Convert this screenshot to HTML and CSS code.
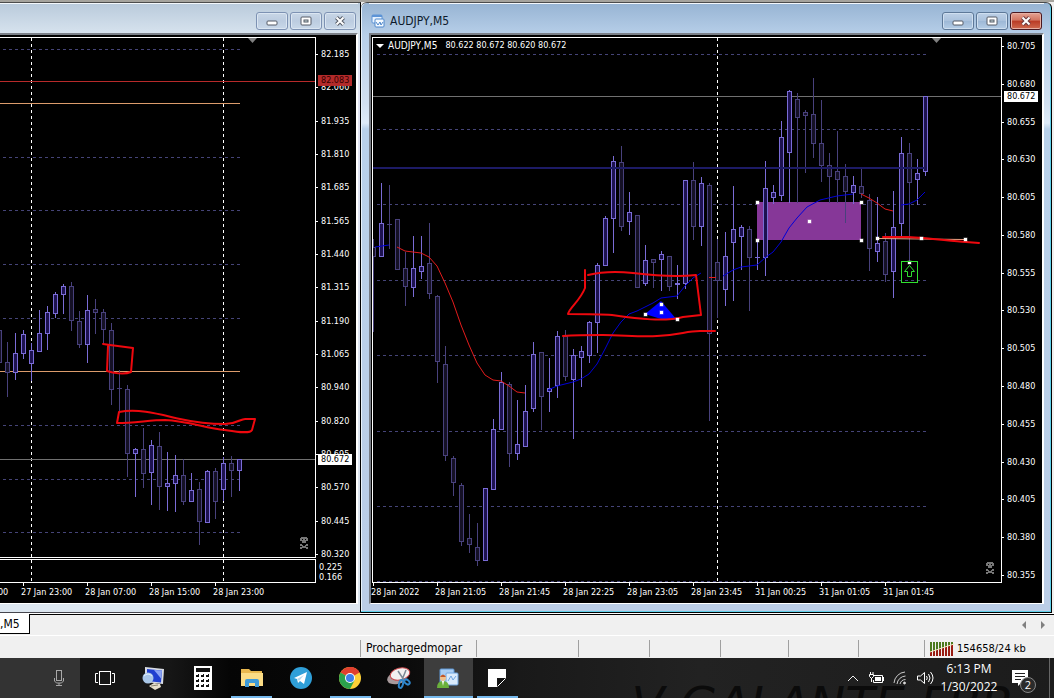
FILE: index.html
```html
<!DOCTYPE html>
<html lang="en">
<head>
    <meta charset="UTF-8">
    <meta name="viewport" content="width=device-width, initial-scale=1.0">
    <title>AUDJPY,M5</title>
    <link rel="stylesheet" href="styles.css">
</head>
<body>

    <main class="workspace">
        <section class="window">
            <header class="titlebar">
                <div class="win-buttons">
                    <button class="win-btn" aria-label="Minimize"><svg width="12" height="10"><rect x="1" y="5" width="10" height="4" rx="1" fill="#fff" stroke="#555b66"/></svg></button>
                    <button class="win-btn" aria-label="Restore"><svg width="12" height="10"><rect x="1" y="1" width="10" height="8" rx="1" fill="#fff" stroke="#555b66"/><rect x="4" y="4" width="4" height="2" fill="#cdd" stroke="#555b66"/></svg></button>
                    <button class="win-btn" aria-label="Close"><svg width="12" height="10"><path d="M2.500 1.500L9.500 8.500M9.500 1.500L2.500 8.500" stroke="#555b66" stroke-width="4"/><path d="M2.500 1.500L9.500 8.500M9.500 1.500L2.500 8.500" stroke="#fff" stroke-width="2"/></svg></button>
                </div>
            </header>
            <div class="chart">
                <div class="plot plot-main">
                    <svg class="canvas" id="chart-left">
                        <g transform="translate(0 -38)">
                            <path class="grid" d="M3 49.500H240M3 157.500H240M3 210.500H240M3 264.500H240M3 318.500H240M3 425.500H240M3 479.500H240M3 532.500H240"/>
                            <path class="day" d="M31.500 38V557M223.500 38V557"/>
                            <path class="sell-line" d="M0 81.500H315"/>
                            <path class="level" d="M0 103.500H240M0 371.500H240"/>
                            <path class="bid" d="M0 459.500H315"/>
                            <g class="candles"></g>
                            <path fill="#808080" d="M248 38h9l-4.500 5z"/>
                            <g class="pen">
                                <path d="M103 344L110 345L133 348L131 372C124 375 113 373 107 371L108 346"/>
                                <path d="M119 412C140 408 162 415 180 419S215 424 225 424C238 424 241 418 246 419L255 419L252 430C250 434 238 432 225 430C205 428 188 421 165 420C150 420 135 423 117 423Z"/>
                            </g>
                            <g class="skull" transform="translate(300 537)"><path d="M1 0h6v1h1v3H6v2H2V4H0V1h1z"/><path d="M2 2h1v1H2zM5 2h1v1H5z" fill="#000"/><path d="M0 7h2v1h1v1h2V8h1V7h2v2H6v1h2v2H6v-1H2v1H0v-2h2V9H0z"/></g>
                        </g>
                    </svg>
                </div>
                <div class="plot plot-sub">
                    <svg class="canvas"><path class="day" d="M31.500 0V22M223.500 0V22"/></svg>
                </div>
                <div class="price-axis">
                    <ul class="prices prices-left">
                        <li>82.185</li><li>82.060</li><li>81.935</li><li>81.810</li>
                        <li>81.685</li><li>81.565</li><li>81.440</li><li>81.315</li>
                        <li>81.190</li><li>81.065</li><li>80.940</li><li>80.820</li>
                        <li>80.695</li><li>80.570</li><li>80.445</li><li>80.320</li>
                    </ul>
                    <ul class="sub-prices"><li>0.225</li><li>0.166</li></ul>
                    <span class="tag tag-sell">82.083</span>
                    <span class="tag tag-bid-left">80.672</span>
                </div>
                <ul class="times times-left">
                    <li>27 Jan 15:00</li><li>27 Jan 23:00</li><li>28 Jan 07:00</li><li>28 Jan 15:00</li><li>28 Jan 23:00</li>
                </ul>
            </div>
        </section>

        <section class="window active">
            <header class="titlebar">
                <svg class="win-icon" width="14" height="14"><rect x="1" y="1" width="10" height="8" rx="1" fill="#e8f3ff" stroke="#5d94d6"/><path d="M1 2h10" stroke="#5d94d6" stroke-width="2"/><rect x="4" y="5" width="9" height="8" rx="1" fill="#f4faff" stroke="#4f88cc"/><path d="M5 8l2 3 2-3 1 3 2-3" fill="none" stroke="#4f88cc"/></svg>
                <h1 class="title">AUDJPY,M5</h1>
                <div class="win-buttons">
                    <button class="win-btn" aria-label="Minimize"><svg width="12" height="10"><rect x="1" y="5" width="10" height="4" rx="1" fill="#fff" stroke="#555b66"/></svg></button>
                    <button class="win-btn" aria-label="Restore"><svg width="12" height="10"><rect x="1" y="1" width="10" height="8" rx="1" fill="#fff" stroke="#555b66"/><rect x="4" y="4" width="4" height="2" fill="#cdd" stroke="#555b66"/></svg></button>
                    <button class="win-btn close" aria-label="Close"><svg width="12" height="10"><path d="M2.500 1.500L9.500 8.500M9.500 1.500L2.500 8.500" stroke="#6b3a40" stroke-width="4"/><path d="M2.500 1.500L9.500 8.500M9.500 1.500L2.500 8.500" stroke="#fff" stroke-width="2"/></svg></button>
                </div>
            </header>
            <div class="chart">
                <div class="plot plot-main">
                    <svg class="canvas" id="chart-right">
                        <g transform="translate(-373 -38)">
                            <path class="grid" d="M377 54.500H926M377 129.500H926M377 204.500H926M377 280.500H926M377 355.500H926M377 431.500H926M377 506.500H926M377 581.500H926"/>
                            <rect x="757" y="202" width="104" height="38" fill="#863798"/>
                            <path class="day" d="M717.500 38V582"/>
                            <path class="bid" d="M373 96.500H1001"/>
                            <g class="candles"></g>
                            <path stroke="#1d1b66" stroke-width="2" d="M373 168H925"/>
                            <path class="ma-down" d="M397 247L405 251L413 252L421 253L429 257L437 266L445 283L453 302L461 325L469 345L477 363L485 375L493 380L501 381L509 386L517 392L525 393M709 277.500H716M861 194L869 198L877 203L885 209L893 211"/>
                            <path class="ma-up" d="M375 247L382 246L389 245M548 390L557 386L573 382L581 379L589 374L597 364L605 349L613 333L621 322L629 314L637 311L653 303L661 298L677 296L685 286L693 278L701 273M723 276L733 270L741 267L757 265L766 257L773 252L781 242L789 228L797 218L807 207L820 200L837 196L853 194M901 205L909 204L917 200L925 192"/>
                            <path fill="#0000ff" d="M645 314L661 301L677 320L661 319Z"/>
                            <path stroke="#f0a080" d="M877 238.500L965 239.500"/>
                            <g class="pen">
                                <path d="M585 270L585 288C580 301 569 308 568 314C585 314 600 314 612 315C640 319 664 322 683 317L701 315L696 275C677 277 650 275 633 273S600 272 588 275"/>
                                <path d="M563 336C577 335 590 335 603 335C622 335 640 337 657 336C680 335 686 331 700 331L715 331"/>
                                <path d="M883 237L908 237C930 238 950 241 966 242L979 243"/>
                            </g>
                            <g class="handles"></g>
                            <rect class="buy" x="901.500" y="261.500" width="16" height="21"/>
                            <path class="buy" d="M909.500 265.500L914.500 271.500H911.500V276.500H907.500V271.500H904.500Z"/>
                            <path fill="#808080" d="M932 38h9l-4.500 5z"/>
                            <path fill="#fff" d="M376 44h8l-4 4z"/>
                            <g class="skull" transform="translate(986 562)"><path d="M1 0h6v1h1v3H6v2H2V4H0V1h1z"/><path d="M2 2h1v1H2zM5 2h1v1H5z" fill="#000"/><path d="M0 7h2v1h1v1h2V8h1V7h2v2H6v1h2v2H6v-1H2v1H0v-2h2V9H0z"/></g>
                        </g>
                    </svg>
                    <p class="quote"><span class="symbol">AUDJPY,M5</span><span>80.622 80.672 80.620 80.672</span></p>
                </div>
                <div class="price-axis">
                    <ul class="prices">
                        <li>80.705</li><li>80.680</li><li>80.655</li><li>80.630</li><li>80.605</li>
                        <li>80.580</li><li>80.555</li><li>80.530</li><li>80.505</li><li>80.480</li>
                        <li>80.455</li><li>80.430</li><li>80.405</li><li>80.380</li><li>80.355</li>
                    </ul>
                    <span class="tag tag-bid-right">80.672</span>
                </div>
                <ul class="times">
                    <li>28 Jan 2022</li><li>28 Jan 21:05</li><li>28 Jan 21:45</li><li>28 Jan 22:25</li><li>28 Jan 23:05</li>
                    <li>28 Jan 23:45</li><li>31 Jan 00:25</li><li>31 Jan 01:05</li><li>31 Jan 01:45</li>
                </ul>
            </div>
        </section>
    </main>

    <nav class="tabs">
        <button class="tab">,M5</button>
        <div class="tab-scroll">
            <button aria-label="Scroll left"><svg width="4" height="8"><path d="M4 0v8L0 4z" fill="#808080"/></svg></button>
            <button aria-label="Scroll right"><svg width="4" height="8"><path d="M0 0v8l4-4z" fill="#808080"/></svg></button>
        </div>
    </nav>

    <footer class="statusbar">
        <span></span>
        <span>Prochargedmopar</span>
        <span></span><span></span><span></span><span></span><span></span><span></span>
        <span class="traffic">
            <svg width="24" height="14"><path d="M1 0v14M4 0v14M7 0v14M10 0v14M13 0v14M16 0v14M19 0v14M22 0v14" stroke="#4c7a1e" stroke-width="2"/><path d="M1 10v4M4 9v5M7 8v6M10 7v7M13 6v8M16 5v9M19 4v10M22 3v11" stroke="#9a1c12" stroke-width="2"/><path d="M0 10L24 2" stroke="#f0e8c0"/></svg>
            154658/24 kb
        </span>
    </footer>

    <div class="taskbar">
        <span class="wallpaper" aria-hidden="true">V GALANTE FBR</span>
        <button class="search" aria-label="Voice search"><svg width="12" height="18" fill="none" stroke="#a8a8a8"><rect x="3.500" y="1.500" width="5" height="10"/><path d="M1.500 9v3l2 2h5l2-2V9M6 14v3M3 16.500h6"/></svg></button>
        <div class="apps">
            <button class="app" aria-label="Task view"><svg width="20" height="16" fill="none" stroke="#fff"><rect x="4.500" y="1.500" width="11" height="13"/><path d="M3 3.500H.5v9H3M17 3.500h2.500v9H17"/></svg></button>
            <button class="app" aria-label="Remote desktop"><svg width="24" height="24"><path d="M3 1l19 2-1 15-18-2z" fill="#d8dce4"/><path d="M5 3l15 1.500-1 12L5 15z" fill="#1f3fd0"/><path d="M12 4l8 .5-1 8z" fill="#8ba4f4"/><circle cx="6" cy="12" r="5.500" fill="#a9c6e8"/><path d="M2 10q4-4 8 0" stroke="#e5f0fb" fill="none"/><path d="M7 20l5-3 6 1 1 3-6 3z" fill="#e6dfcd"/><path d="M9 20l7-1" stroke="#8b8672"/></svg></button>
            <button class="app" aria-label="Calculator"><svg width="18" height="24"><path fill="#fff" d="M0 0h18v24H0z"/><path fill="#111" d="M2 2h14v4H2zM2 8h3v3H2zM7 8h3v3H7zM12 8h3v3h-3zM2 13h3v3H2zM7 13h3v3H7zM12 13h3v3h-3zM2 18h3v3H2zM7 18h3v3H7zM12 18h3v3h-3z"/><path fill="#fff" d="M2 8h2v1H2zM7 8h2v1H7zM12 8h2v1h-2zM2 13h2v1H2zM7 13h2v1H7zM12 13h2v1h-2zM2 18h2v1H2zM7 18h2v1H7zM12 18h2v1h-2z"/></svg></button>
            <button class="app running" aria-label="File Explorer"><svg width="22" height="20"><path d="M0 1h8l2 2h11v15H0z" fill="#e9b84e"/><path d="M0 5h22v13H0z" fill="#fbdc85"/><path d="M4 19v-6q0-2 2-2h10q2 0 2 2v6h-4v-4H8v4z" fill="#3f9bd8"/></svg></button>
            <button class="app" aria-label="Telegram"><svg width="22" height="22"><circle cx="11" cy="11" r="11" fill="#2f9fd8"/><path d="M4 11l13-6-3 12-4-3-2 2-1-4z" fill="#fff"/><path d="M7 12l7-4-5 6z" fill="#b8dcf0"/></svg></button>
            <button class="app running" aria-label="Chrome"><svg width="22" height="22" viewBox="0 0 22 22"><circle cx="11" cy="11" r="11" fill="#fdd037"/><path d="M11 11L1.500 5.500A11 11 0 0 1 20.500 5.500z" fill="#e0402f"/><path d="M11 0a11 11 0 0 1 9.500 5.500H11z" fill="#e0402f"/><path d="M1.500 5.500A11 11 0 0 0 11 22l4.500-8.500L11 11z" fill="#2ba24c"/><circle cx="11" cy="11" r="5" fill="#fff"/><circle cx="11" cy="11" r="4" fill="#3f7fe8"/></svg></button>
            <button class="app" aria-label="Snipping Tool"><svg width="24" height="24"><ellipse cx="10" cy="12" rx="10" ry="6" fill="#a89a9c" transform="rotate(-14 10 12)"/><ellipse cx="13" cy="8" rx="10" ry="6" fill="#f3f0f0" stroke="#c8484c" stroke-width="1" transform="rotate(-14 13 8)"/><path d="M11 5l6 9M19 4l-4 10" stroke="#7c8794" stroke-width="1.500"/><ellipse cx="14" cy="18" rx="2" ry="4" fill="none" stroke="#2f86cc" stroke-width="2" transform="rotate(15 14 18)"/><ellipse cx="20" cy="16" rx="2" ry="3" fill="none" stroke="#2f86cc" stroke-width="2" transform="rotate(-50 20 16)"/></svg></button>
            <button class="app running current" aria-label="MetaTrader"><svg width="22" height="22"><rect x="3" y="2" width="14" height="14" rx="1" fill="#a9cdf3" stroke="#5e98d6"/><rect x="9" y="6" width="12" height="12" rx="1" fill="#d9eafc" stroke="#6ea5e0"/><path d="M11 14l3-5 2 4 3-4" stroke="#6ea5e0" fill="none"/><circle cx="6" cy="11" r="3" fill="#f0c08c"/><path d="M3 10q3-5 6 0" fill="#c0572a"/><path d="M0 21q0-7 6-7t6 7z" fill="#6ab03c"/><path d="M5 14h2l-1 5z" fill="#fff"/></svg></button>
            <button class="app running" aria-label="Sticky Notes"><svg width="18" height="18"><path d="M0 0h18v9H9v9H0z" fill="#fff"/><path d="M10 18v-8h8z" fill="#111"/><path d="M9.500 17.500L17.500 9.500" stroke="#fff"/></svg></button>
        </div>
        <div class="tray">
            <button aria-label="Show hidden icons"><svg width="12" height="8" fill="none" stroke="#eee"><path d="M1 7l5-5 5 5"/></svg></button>
            <button aria-label="Battery"><svg width="16" height="14" fill="none" stroke="#fff"><path d="M6 4.500h8.500v7H5.500V9"/><path d="M15.500 6v4"/><path d="M7 6h6v4H7z" fill="#fff" stroke="none"/><path d="M2.500 1v2M5 1v2M1.500 3.500h4v2l-2 2-2-2zM3.500 7v4"/></svg></button>
            <button aria-label="Network"><svg width="14" height="14" fill="none" stroke="#ccc"><path d="M1 12A12 12 0 0 1 12 1M4 13A9 9 0 0 1 12.500 5M7 13A6 6 0 0 1 12.500 8.500"/><circle cx="11.500" cy="12" r="1" fill="#fff"/></svg></button>
            <button aria-label="Volume"><svg width="18" height="14" fill="none" stroke="#fff"><path d="M1.500 5h3L8.500 1.500v11L4.500 9h-3zM10.500 5q1.500 2 0 4M12.500 3q3 4 0 8M14.500 1q5 6 0 12"/></svg></button>
            <time class="clock" datetime="2022-01-30T18:13"><span>6:13 PM</span><span>1/30/2022</span></time>
            <button class="notify" aria-label="Notifications"><svg width="16" height="16"><path d="M0 0h16v13H9l-3 3v-3H0z" fill="#fff"/><path d="M3 3.500h10M3 6.500h10M3 9.500h6" stroke="#222"/></svg><span class="badge">2</span></button>
            <button class="show-desktop" aria-label="Show desktop"></button>
        </div>
    </div>

    <script src="chart.js"></script>
</body>
</html>
```
FILE: styles.css
```css
* {
    box-sizing: border-box;
}

body {
    margin: 0;
    height: 100vh;
    display: flex;
    flex-direction: column;
    overflow: hidden;
    background: #f0f0f0;
    font-family: "DejaVu Sans Condensed", "DejaVu Sans", sans-serif;
    font-size: 9px;
}

ul, p, h1 {
    margin: 0;
    padding: 0;
    list-style: none;
}

button {
    margin: 0;
    padding: 0;
    border: none;
    background: none;
    font: inherit;
    color: inherit;
    display: flex;
    align-items: center;
    justify-content: center;
}

/* chart windows */
.workspace {
    flex: 1;
    min-height: 0;
    display: grid;
    grid-template-columns: 361fr 693fr;
    border-top: 2px solid #a5a39d;
    border-bottom: 1px solid #fff;
}

.window {
    min-width: 0;
    display: flex;
    flex-direction: column;
    padding: 0 2px 8px 0;
    border-top: 1px solid #4c4c4c;
    border-right: 1px solid #000;
    border-bottom: 1px solid #45454d;
    background: linear-gradient(#b9cadb, #d8e4ef 32px, #e1e3f4 60px, #dce6f0);
}

.active {
    margin-right: 2px;
    padding: 0 7px 8px 8px;
    border-bottom-color: #000;
    border-radius: 6px 6px 0 0;
    background: linear-gradient(#97b4d3, #b7cfe9 32px, #d2e0f0 100px, #deebf8 120px, #b9d1ea 126px, #bbcde6);
    box-shadow: inset -1px -1px #5fd0ea, inset 1px 0 #e8f2fa;
}

.titlebar {
    flex: none;
    height: 30px;
    display: flex;
    align-items: center;
    padding-top: 5px;
    border-top: 1px solid #f4f8fc;
}

.active .titlebar {
    padding-left: 2px;
}

.title {
    margin-left: 5px;
    font-size: 12px;
    font-weight: normal;
    color: #0d1a2b;
}

.win-buttons {
    display: flex;
    gap: 2px;
    margin-left: auto;
    padding-right: 2px;
}

.win-btn {
    width: 32px;
    height: 18px;
    border: 1px solid #7d92b3;
    border-radius: 3px;
    background: linear-gradient(#c8d6e6, #bccce0 50%, #c9d8e9);
    box-shadow: inset 0 0 0 1px #dbe6f2;
}

.active .win-btn {
    border-color: #5d7898;
    background: linear-gradient(#bdd0e6, #a9c1dc 50%, #9db8d6 51%, #b5cde6);
    box-shadow: inset 0 0 0 1px #cfdff0;
}

.active .close {
    border-color: #4a1820;
    background: linear-gradient(#e5a293, #d27561 45%, #b93a25 50%, #cf6a50);
    box-shadow: inset 0 0 0 1px #e6b0a4;
}

.chart {
    flex: 1;
    min-height: 0;
    display: grid;
    grid-template-columns: 1fr 40px;
    grid-template-rows: 1fr auto 20px;
    padding-top: 2px;
    background: #000;
    color: #fff;
    border-top: 2px solid #7b8088;
    border-right: 2px solid #fff;
    border-bottom: 1px solid #fff;
}

.active .chart {
    border-left: 2px solid #777c84;
    padding-left: 1px;
}

.plot {
    position: relative;
    min-width: 0;
    min-height: 0;
    border: 1px solid #fff;
    border-left: none;
}

.active .plot {
    border-left: 1px solid #fff;
    grid-row: 1 / 3;
}

.plot-sub {
    height: 24px;
    margin-top: 1px;
}

.canvas {
    display: block;
    position: absolute;
    width: 100%;
    height: 100%;
}

.quote {
    position: relative;
    display: flex;
    gap: 8px;
    padding: 2px 0 0 15px;
    line-height: 11px;
}

.symbol {
    font-size: 10px;
}

.price-axis {
    position: relative;
    grid-column: 2;
    grid-row: 1 / 3;
    display: flex;
    flex-direction: column;
    line-height: 11px;
}

.prices {
    flex: 1;
    display: flex;
    flex-direction: column;
    justify-content: space-between;
    padding: 4px 0 2px;
}

.prices-left {
    padding: 12px 0 2px;
}

.prices li {
    position: relative;
    padding-left: 5px;
}

.prices li::before {
    content: "";
    position: absolute;
    left: 0;
    top: 5px;
    width: 2px;
    height: 1px;
    background: #fff;
}

.sub-prices {
    height: 21px;
    padding-left: 3px;
    line-height: 10px;
}

.tag {
    position: absolute;
    left: 2px;
    width: 34px;
    padding-left: 3px;
    background: #fff;
    color: #000;
}

.tag-sell {
    top: 38px;
    background: #b22a2a;
    color: #300;
}

.tag-bid-left {
    top: 417px;
}

.tag-bid-right {
    top: 54px;
}

.times {
    grid-column: 1 / 3;
    display: flex;
    overflow: hidden;
    line-height: 18px;
    margin-left: -1px;
}

.times-left {
    margin-left: 0;
}

.times li {
    position: relative;
    flex: 0 0 64px;
}

.times-left li:first-child {
    margin-left: -43px;
}

.times li::before {
    content: "";
    position: absolute;
    left: 2px;
    top: 0;
    width: 1px;
    height: 3px;
    background: #fff;
}

/* chart drawing */
.grid {
    stroke: #454478;
    stroke-dasharray: 3 3;
}

.day {
    stroke: #fff;
    stroke-dasharray: 3 3;
}

.bid {
    stroke: #707070;
}

.sell-line {
    stroke: #b82a2a;
}

.level {
    stroke: #dc9c6c;
}

.up {
    stroke: #7a6cd6;
    fill: #1d1250;
}

.down {
    stroke: #48417c;
    fill: #151126;
}

.ma-up, .ma-down {
    fill: none;
    stroke: #0000d8;
}

.ma-down {
    stroke: #e41c1c;
}

.pen {
    fill: none;
    stroke: #ee080e;
    stroke-width: 2;
    stroke-linecap: round;
    stroke-linejoin: round;
}

.buy {
    fill: none;
    stroke: #2fe02f;
}

.skull {
    fill: #777;
}

/* tabs and status bar */
.tabs {
    flex: none;
    height: 21px;
    display: flex;
    justify-content: space-between;
    border-top: 1px solid #000;
    font-size: 12px;
}

.tab {
    width: 30px;
    height: 20px;
    margin-top: -1px;
    justify-content: flex-start;
    background: #fff;
    border-right: 1px solid #000;
    border-bottom: 1px solid #000;
}

.tab-scroll {
    display: flex;
    gap: 15px;
    padding-right: 9px;
}

.statusbar {
    flex: none;
    height: 23px;
    display: grid;
    grid-template-columns: 360fr 116fr 102fr 71fr 71fr 68fr 70fr 66fr 130fr;
    padding: 4px 0 1px;
    border-top: 1px solid #fff;
    font-size: 12px;
    line-height: 17px;
}

.statusbar span {
    min-width: 0;
    white-space: nowrap;
    padding-left: 5px;
}

.statusbar span + span {
    border-left: 1px solid #a0a0a0;
}

.traffic {
    display: flex;
    align-items: center;
    gap: 3px;
    font-size: 11px;
}

/* taskbar */
.taskbar {
    position: relative;
    flex: none;
    height: 40px;
    display: flex;
    overflow: hidden;
    background: linear-gradient(90deg, #161616 170px, #050505 230px, #0a0a0a 400px, #191919 520px, #222 700px, #1c1c1c);
    color: #fff;
    font-family: "Open Sans", "Noto Sans", sans-serif;
    font-size: 12px;
}

.wallpaper {
    position: absolute;
    right: 40px;
    top: 16px;
    font: italic 48px/60px "DejaVu Sans", sans-serif;
    white-space: nowrap;
    color: #0b0b0b;
}

.search {
    width: 80px;
    background: #333;
    justify-content: flex-end;
    padding-right: 15px;
}

.apps {
    flex: 0 1 442px;
    display: flex;
}

.app {
    flex: 1;
    position: relative;
}

.running::after {
    content: "";
    position: absolute;
    left: 4px;
    right: 4px;
    bottom: 0;
    height: 2px;
    background: #76b9ed;
}

.current {
    background: #3d3d3d;
}

.current::after {
    left: 0;
    right: 0;
}

.tray {
    position: relative;
    margin-left: auto;
    display: flex;
    align-items: center;
    gap: 9px;
}

.tray button {
    height: 40px;
}

.clock {
    width: 52px;
    display: flex;
    flex-direction: column;
    align-items: center;
    line-height: 18px;
}

.notify {
    position: relative;
    width: 28px;
    margin: 0 6px 0 2px;
}

.badge {
    position: absolute;
    left: 14px;
    top: 19px;
    width: 16px;
    height: 16px;
    border: 1px solid #888;
    border-radius: 50%;
    background: #2b2b2b;
    font-size: 11px;
    line-height: 14px;
}

.tray .show-desktop {
    width: 5px;
    border-left: 1px solid #666;
}
```
FILE: chart.js
```js
// one row per bar: high, body top, body bottom, low, direction
const leftBars = [
    [330, 330, 362, 362, 'd'], [342, 362, 372, 396, 'd'], [333, 353, 372, 379, 'u'], [330, 334, 353, 358, 'u'],
    [343, 350, 363, 380, 'u'], [310, 333, 351, 351, 'u'], [306, 312, 333, 349, 'u'], [292, 294, 313, 317, 'u'],
    [284, 286, 294, 313, 'u'], [282, 286, 320, 330, 'd'], [311, 321, 344, 347, 'd'], [295, 310, 344, 362, 'u'],
    [299, 309, 312, 333, 'd'], [309, 312, 329, 344, 'd'], [323, 330, 389, 404, 'd'], [370, 388, 388, 412, 'd'],
    [385, 389, 453, 476, 'd'], [448, 449, 453, 496, 'u'], [428, 449, 473, 487, 'd'], [440, 445, 472, 504, 'u'],
    [432, 446, 486, 509, 'd'], [452, 483, 486, 510, 'u'], [455, 475, 483, 511, 'u'], [459, 475, 501, 504, 'd'],
    [473, 490, 501, 501, 'u'], [482, 489, 521, 544, 'd'], [470, 471, 522, 522, 'u'], [468, 471, 501, 518, 'd'],
    [457, 463, 489, 500, 'u'], [456, 463, 470, 496, 'd'], [459, 459, 470, 490, 'u']
];

const rightBars = [
    [239, 247, 256, 331, 'd'], [183, 223, 256, 256, 'u'], [185, 224, 224, 248, 'd'], [219, 219, 269, 269, 'd'],
    [252, 268, 286, 305, 'd'], [236, 268, 287, 296, 'u'], [236, 266, 271, 278, 'u'], [223, 263, 293, 298, 'd'],
    [295, 296, 361, 382, 'd'], [346, 364, 455, 460, 'd'], [456, 458, 482, 495, 'd'], [483, 485, 541, 545, 'd'],
    [514, 538, 544, 552, 'd'], [523, 547, 560, 565, 'd'], [488, 488, 560, 560, 'u'], [419, 429, 489, 489, 'u'],
    [372, 382, 429, 429, 'u'], [382, 384, 453, 466, 'd'], [400, 444, 453, 459, 'u'], [385, 411, 446, 446, 'u'],
    [342, 354, 408, 411, 'u'], [352, 352, 396, 429, 'd'], [358, 388, 391, 411, 'u'], [331, 336, 385, 397, 'u'],
    [330, 336, 376, 380, 'd'], [349, 355, 379, 438, 'u'], [346, 351, 357, 386, 'u'], [321, 322, 355, 362, 'u'],
    [263, 265, 322, 352, 'u'], [216, 218, 265, 265, 'u'], [156, 161, 218, 252, 'u'], [146, 162, 226, 230, 'd'],
    [192, 212, 221, 234, 'u'], [215, 215, 287, 287, 'd'], [245, 260, 283, 285, 'u'], [259, 259, 262, 287, 'd'],
    [251, 254, 259, 290, 'u'], [256, 256, 286, 290, 'd'], [265, 283, 284, 298, 'u'], [180, 180, 283, 288, 'u'],
    [162, 180, 226, 239, 'd'], [177, 183, 226, 245, 'u'], [183, 185, 333, 420, 'd'], [239, 262, 280, 317, 'd'],
    [232, 256, 289, 305, 'u'], [186, 229, 242, 300, 'u'], [225, 227, 236, 269, 'u'], [226, 229, 257, 310, 'd'],
    [240, 257, 257, 269, 'u'], [161, 188, 257, 275, 'u'], [185, 192, 197, 203, 'u'], [121, 137, 195, 200, 'u'],
    [90, 91, 152, 202, 'u'], [93, 99, 117, 202, 'd'], [110, 112, 115, 172, 'd'], [78, 114, 143, 157, 'd'],
    [100, 143, 165, 181, 'd'], [153, 165, 176, 202, 'd'], [131, 171, 179, 202, 'd'], [164, 176, 191, 222, 'd'],
    [176, 185, 192, 203, 'u'], [169, 186, 193, 197, 'd'], [194, 200, 248, 270, 'd'], [197, 243, 251, 261, 'u'],
    [233, 241, 274, 281, 'd'], [191, 227, 271, 297, 'u'], [137, 153, 223, 237, 'u'], [143, 153, 182, 262, 'd'],
    [159, 173, 179, 204, 'u'], [96, 96, 171, 175, 'u']
];

function drawBars(id, bars, startX) {
    let out = '';
    bars.forEach(([high, top, bottom, low, dir], i) => {
        const x = startX + i * 8;
        const cls = dir === 'u' ? 'up' : 'down';
        out += `<path class="${cls}" d="M${x + 0.5} ${high}V${low + 1}"/>`;
        out += `<rect class="${cls}" x="${x - 1.5}" y="${top + 0.5}" width="4" height="${bottom - top}"/>`;
        // doji: rect without height is not painted
        if (bottom === top) {
            out += `<path class="${cls}" d="M${x - 2} ${top + 0.5}h5"/>`;
        }
    });
    document.querySelector(`#${id} .candles`).innerHTML = out;
}

// selection points of the drawn objects
const points = [
    [757, 202], [861, 202], [757, 240], [861, 240], [809, 221],
    [645, 314], [661, 304], [661, 312], [677, 319],
    [877, 238], [921, 238], [965, 239], [909, 262]
];

drawBars('chart-left', leftBars, -1);
drawBars('chart-right', rightBars, 373);

document.querySelector('.handles').innerHTML = points
    .map(([x, y]) => `<rect x="${x - 1}" y="${y - 1}" width="3" height="3" fill="#fff" stroke="#fff" stroke-opacity="0.4"/>`)
    .join('');
```
